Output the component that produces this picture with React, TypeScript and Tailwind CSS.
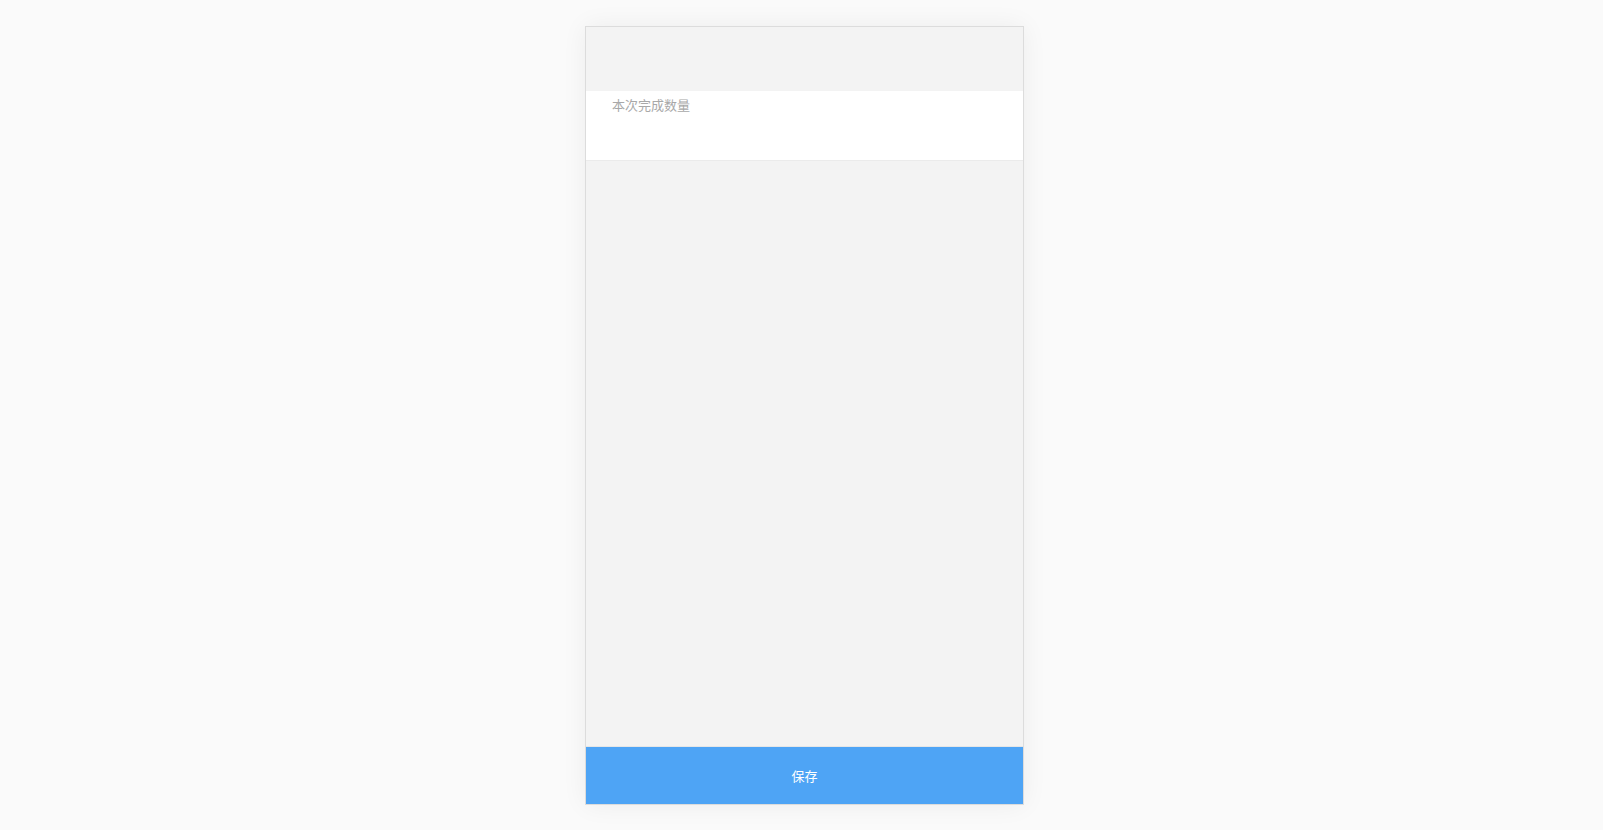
export default function App() {
  return (
    <div
      className="h-[830px] w-full bg-[#fafafa] flex justify-center pl-[6px] pt-[26px]"
      style={{ fontFamily: '"Noto Sans CJK SC", "Noto Sans", sans-serif' }}
    >
      <div className="w-[439px] h-[779px] border border-[#dcdcdc] bg-[#f3f3f3] flex flex-col shadow-[0_0_24px_rgba(0,0,0,0.06)]">
        <div className="h-[64px] bg-[#f3f3f3]" />
        <div className="h-[70px] bg-white border-b border-[#ebebeb] pl-[26px] pt-[3px]">
          <div className="text-[13px] leading-[22px] text-[#a8a8a8]">本次完成数量</div>
        </div>
        <div className="flex-1" />
        <div className="border-t border-[#e6e6e6]">
          <button className="w-full h-[57px] bg-[#4ea4f5] text-white text-[13px] flex items-center justify-center">
            保存
          </button>
        </div>
      </div>
    </div>
  );
}
